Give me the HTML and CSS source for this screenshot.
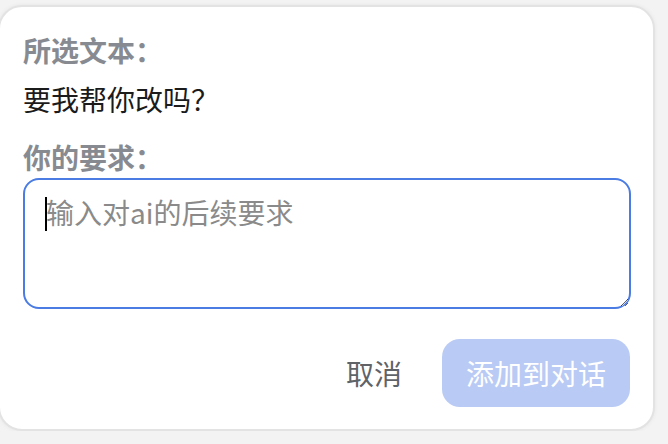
FILE: index.html
```html
<!DOCTYPE html>
<html lang="zh-CN">
<head>
<meta charset="utf-8">
<title>添加到对话</title>
<link rel="stylesheet" href="styles.css">
</head>
<body>
<div class="card">
  <div class="label">所选文本：</div>
  <div class="selected">要我帮你改吗？</div>
  <div class="label label-req">你的要求：</div>
  <div class="input-wrap">
    <textarea class="input" placeholder="输入对ai的后续要求" autofocus></textarea>
    <span class="caret"></span>
  </div>
  <div class="actions">
    <button class="btn-cancel" type="button">取消</button>
    <button class="btn-primary" type="button" disabled>添加到对话</button>
  </div>
</div>
</body>
</html>
```

FILE: styles.css
```css
html, body {
  margin: 0;
  padding: 0;
  background: #f3f3f3;
}
body {
  padding-top: 5px;
  font-family: "Noto Sans", "Noto Sans CJK SC", sans-serif;
}
.card {
  box-sizing: border-box;
  width: 657px;
  height: 426px;
  margin-left: -2px;
  background: #ffffff;
  border: 2px solid #e3e3e3;
  border-radius: 24px;
  box-shadow: 0 0 4px rgba(0, 0, 0, 0.06);
  padding: 25px 23px 0 23px;
  display: flex;
  flex-direction: column;
}
.label {
  font-size: 28px;
  line-height: 36px;
  font-weight: 700;
  color: #878b91;
  font-family: "Noto Sans CJK SC", sans-serif;
}
.selected {
  margin-top: 13px;
  font-size: 28px;
  line-height: 36px;
  color: #1b1b1b;
  font-family: "Noto Sans CJK SC", sans-serif;
}
.label-req {
  margin-top: 22px;
}
.input-wrap {
  position: relative;
  margin-top: 3px;
  width: 608px;
}
.input {
  box-sizing: border-box;
  width: 608px;
  height: 131px;
  border: 2px solid #4a7ce3;
  border-radius: 16px;
  padding: 14px 21px;
  font-family: "Noto Sans CJK SC", sans-serif;
  font-size: 28px;
  line-height: 36px;
  color: #1b1b1b;
  caret-color: transparent;
  outline: none;
  resize: vertical;
  display: block;
}
.input::placeholder {
  color: #8a8a8a;
}
.caret {
  position: absolute;
  left: 22px;
  top: 19px;
  width: 2px;
  height: 34px;
  background: #000;
  pointer-events: none;
}
.actions {
  margin-top: 30px;
  display: flex;
  justify-content: flex-end;
  align-items: center;
  gap: 20px;
}
.btn-cancel {
  background: none;
  border: none;
  padding: 0 20px;
  height: 68px;
  font-family: "Noto Sans CJK SC", sans-serif;
  font-size: 28px;
  color: #5f6368;
}
.btn-primary {
  box-sizing: border-box;
  width: 188px;
  height: 68px;
  border: none;
  border-radius: 18px;
  background: #b9cbf4;
  color: #ffffff;
  font-family: "Noto Sans CJK SC", sans-serif;
  font-size: 28px;
  padding: 0 22px;
}
```
